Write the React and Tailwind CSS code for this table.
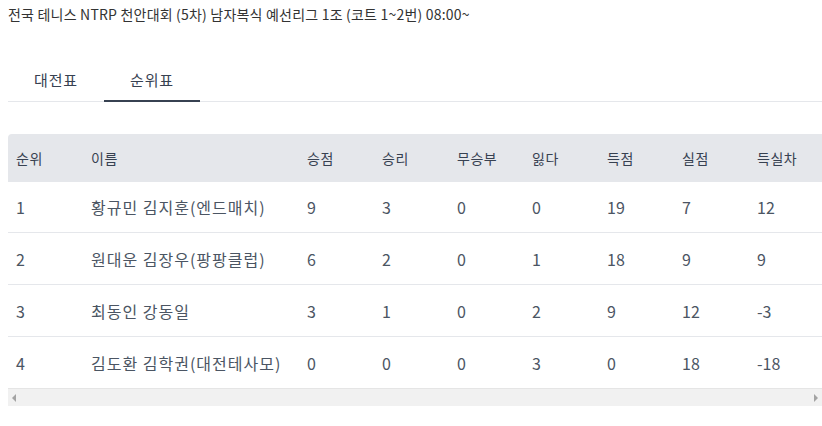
import React from "react";

const rows = [
  ["1", "황규민 김지훈(엔드매치)", "9", "3", "0", "0", "19", "7", "12"],
  ["2", "원대운 김장우(팡팡클럽)", "6", "2", "0", "1", "18", "9", "9"],
  ["3", "최동인 강동일", "3", "1", "0", "2", "9", "12", "-3"],
  ["4", "김도환 김학권(대전테사모)", "0", "0", "0", "3", "0", "18", "-18"],
];
const heads = ["순위", "이름", "승점", "승리", "무승부", "잃다", "득점", "실점", "득실차"];
const widths = ["w-[75px]", "w-[216px]", "w-[75px]", "w-[75px]", "w-[75px]", "w-[75px]", "w-[75px]", "w-[75px]", "w-[75px]"];

export default function App() {
  return (
    <div className="w-[822px] h-[426px] bg-white overflow-hidden text-[#333]" style={{ fontFamily: '"Noto Sans CJK KR", "Noto Sans", sans-serif' }}>
      <div className="pl-2 pt-[3px] h-[22px] text-[14px] leading-[22px] text-[#333] tracking-[0.2px] whitespace-nowrap">
        전국 테니스 NTRP 천안대회 (5차) 남자복식 예선리그 1조 (코트 1~2번) 08:00~
      </div>
      <div className="mt-[46px] ml-2 flex border-b border-[#e5e7eb] h-[34px]">
        <div className="w-[96px] flex justify-center text-[15px] leading-[24px] text-[#374151] tracking-[0.8px]">대전표</div>
        <div className="w-[96px] flex justify-center text-[15px] leading-[24px] text-[#374151] tracking-[0.8px] border-b-2 border-[#374151] -mb-px">순위표</div>
      </div>
      <div className="mt-[32px] ml-2 overflow-hidden">
        <div className="w-[824px]">
          <div className="flex h-[48px] items-center bg-[#e5e7eb] rounded-tl-[4px] text-[14px] text-[#374151] tracking-[0.5px]">
            {heads.map((h, i) => (
              <div key={i} className={`${widths[i]} shrink-0 pl-2`}>{h}</div>
            ))}
          </div>
          {rows.map((r, ri) => (
            <div key={ri} className={`flex items-center text-[16px] text-[#4b5563] ${ri === 0 || ri === 3 ? "h-[51px]" : "h-[52px]"} ${ri < 3 ? "border-b border-[#e5e7eb]" : ""}`}>
              {r.map((c, i) => (
                <div key={i} className={`${widths[i]} shrink-0 pl-2 whitespace-nowrap ${i === 1 ? "tracking-[1px]" : ""}`}>{c}</div>
              ))}
            </div>
          ))}
        </div>
        <div className="h-[18px] w-[814px] bg-[#f1f1f1] border-t border-[#e5e5e5] flex items-center justify-between px-[4px]">
          <svg width="5" height="8" viewBox="0 0 5 8"><path d="M4 0 L0 4 L4 8 Z" fill="#a3a3a3" /></svg>
          <svg width="5" height="8" viewBox="0 0 5 8"><path d="M1 0 L5 4 L1 8 Z" fill="#a3a3a3" /></svg>
        </div>
      </div>
    </div>
  );
}
